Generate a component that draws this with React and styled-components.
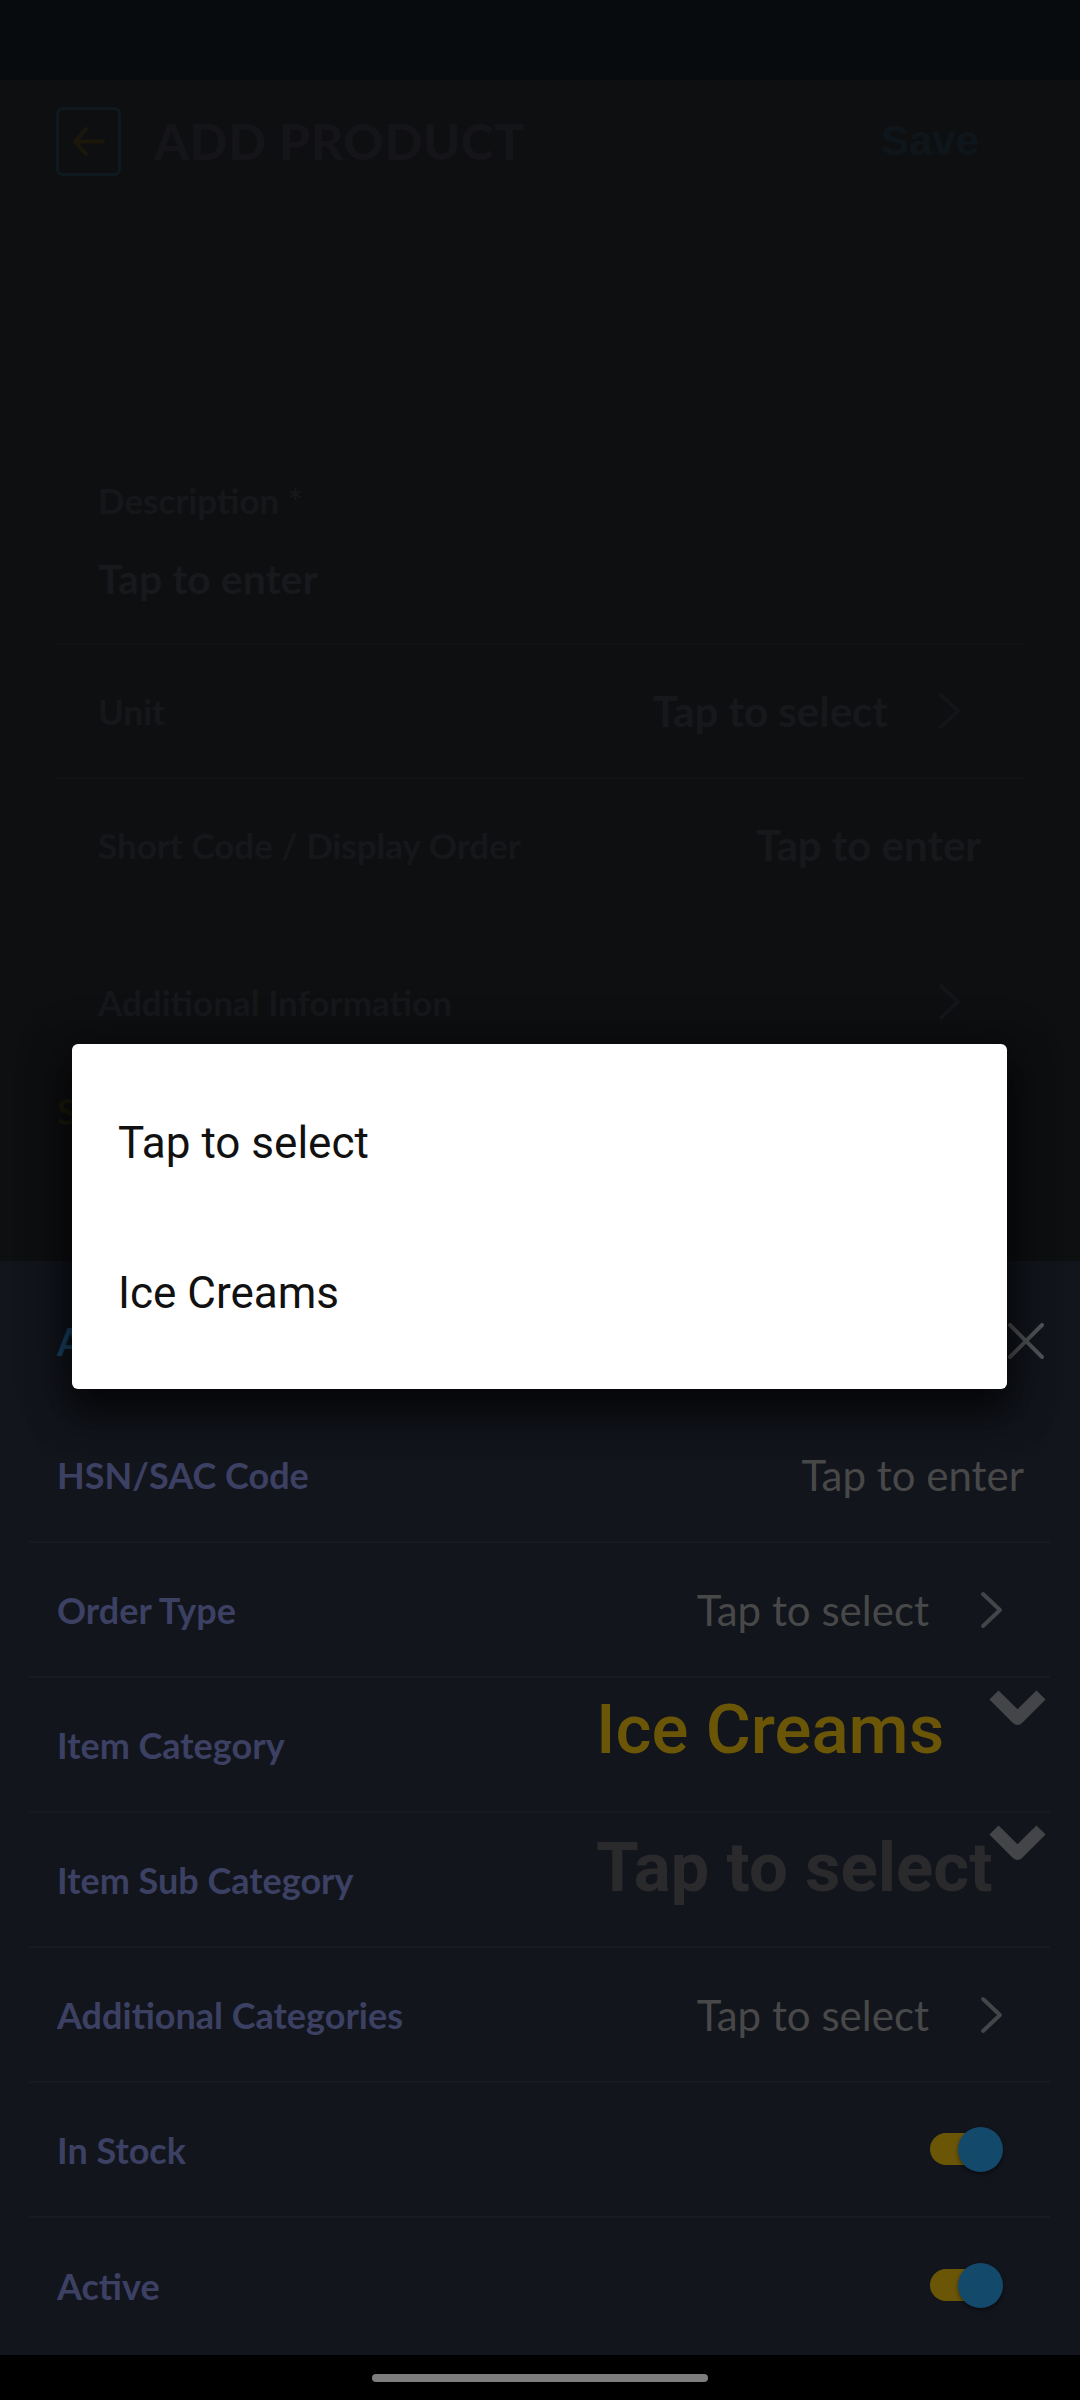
import React from 'react';
import styled, { createGlobalStyle } from 'styled-components';

const GlobalStyle = createGlobalStyle`
  body {
    margin: 0;
    background: #000;
    font-family: Lato, "Noto Sans", sans-serif;
  }
`;

const Phone = styled.div`
  position: relative;
  width: 1080px;
  height: 2400px;
  display: flex;
  flex-direction: column;
  overflow: hidden;
`;

const StatusBar = styled.div`
  height: 80px;
  background: #080b0e;
`;

const Screen = styled.div`
  height: 1181px;
  background: #0e0f11;
  display: flex;
  flex-direction: column;
`;

const Header = styled.div`
  height: 122px;
  display: flex;
  align-items: center;
  padding: 0 101px 0 56px;
`;

const BackButton = styled.div`
  width: 65px;
  height: 69px;
  box-sizing: border-box;
  border: 3px solid #0f1a20;
  border-radius: 7px;
  display: flex;
  align-items: center;
  justify-content: center;
`;

const Title = styled.h1`
  margin: 0 0 0 33px;
  font-size: 50px;
  font-weight: 900;
  color: #151418;
  letter-spacing: 0.5px;
`;

const Save = styled.span`
  margin-left: auto;
  font-family: "Liberation Sans", Arial, sans-serif;
  font-weight: 700;
  font-size: 42px;
  color: #0f161b;
`;

const FormCard = styled.div`
  margin: 277px 54px 0 55px;
`;

const FieldLabel = styled.div`
  font-size: 35px;
  font-weight: 700;
  line-height: 1.2;
  color: #16171a;
  white-space: nowrap;
`;

const DescriptionBlock = styled.div`
  padding: 0 45px 40px 43px;
`;

const Placeholder = styled.div`
  margin-top: 33px;
  font-size: 41px;
  font-weight: 700;
  line-height: 1.2;
  color: #18191c;
`;

const FormRow = styled.div`
  height: 134px;
  box-sizing: border-box;
  display: flex;
  align-items: center;
  padding: 0 45px 0 43px;
  border-top: ${(p) => (p.$line ? '2px solid #111215' : 'none')};
  margin-top: ${(p) => p.$gap || 0}px;
`;

const FormValue = styled.span`
  margin-left: auto;
  font-size: 42px;
  font-weight: 700;
  color: #17181b;
`;

const ChevronBox = styled.span`
  display: flex;
  margin-left: ${(p) => (p.$gap ? `${p.$gap}px` : 'auto')};
  margin-right: ${(p) => p.$right || 0}px;
`;

const SectionTitle = styled.div`
  margin: 20px 0 0 57px;
  font-size: 36px;
  font-weight: 700;
  color: #1f1a0d;
  white-space: nowrap;
`;

const Sheet = styled.div`
  height: 1094px;
  background: #12151c;
  display: flex;
  flex-direction: column;
`;

const SheetHeader = styled.div`
  height: 147px;
  box-sizing: border-box;
  padding: 12px 36px 0 57px;
  display: flex;
  align-items: center;
  justify-content: space-between;
`;

const SheetTitle = styled.div`
  font-size: 38px;
  font-weight: 700;
  color: #18476a;
  white-space: nowrap;
`;

const List = styled.div`
  margin: 0 30px 0 29px;
`;

const Row = styled.div`
  height: 135px;
  box-sizing: border-box;
  display: flex;
  align-items: center;
  padding: 0 26px 0 28px;
  border-bottom: ${(p) => (p.$last ? 'none' : '2px solid #171a22')};
`;

const Label = styled.span`
  font-size: 36px;
  font-weight: 700;
  color: #3c4063;
`;

const Value = styled.span`
  margin-left: auto;
  font-size: 42px;
  color: #484849;
`;

const Spinner = styled.div`
  position: relative;
  align-self: stretch;
  width: 452px;
  margin-left: auto;
  margin-right: -24px;
`;

const SpinnerText = styled.div`
  margin-top: ${(p) => p.$top}px;
  font-family: Roboto, "Noto Sans", sans-serif;
  font-size: ${(p) => p.$size}px;
  font-weight: ${(p) => p.$weight};
  line-height: 1;
  color: ${(p) => p.$color};
  white-space: nowrap;
`;

const SpinnerArrow = styled.svg`
  position: absolute;
  top: 12px;
  right: 0;
`;

const Switch = styled.div`
  position: relative;
  width: 73px;
  height: 45px;
  margin-left: auto;
  margin-right: 21px;
`;

const Track = styled.div`
  position: absolute;
  left: 0;
  top: 6px;
  width: 58px;
  height: 32px;
  border-radius: 16px;
  background: #6b5608;
`;

const Thumb = styled.div`
  position: absolute;
  right: 0;
  top: 0;
  width: 45px;
  height: 45px;
  border-radius: 50%;
  background: #134a6c;
  box-shadow: 0 2px 4px rgba(0, 0, 0, 0.45);
`;

const NavBar = styled.div`
  flex: 1;
  background: #000;
  display: flex;
  align-items: center;
  justify-content: center;
`;

const HomeIndicator = styled.div`
  width: 336px;
  height: 8px;
  border-radius: 4px;
  background: #7d7d7d;
`;

const Dialog = styled.div`
  position: absolute;
  left: 72px;
  top: 1044px;
  width: 935px;
  height: 345px;
  box-sizing: border-box;
  padding-top: 24px;
  background: #fff;
  border-radius: 6px;
  box-shadow: 0 24px 38px 3px rgba(0, 0, 0, 0.5), 0 9px 46px 8px rgba(0, 0, 0, 0.4);
`;

const DialogItem = styled.div`
  height: 150px;
  display: flex;
  align-items: center;
  padding-left: 46px;
  font-family: Roboto, "Noto Sans", sans-serif;
  font-size: 44px;
  color: #111;
`;

function ChevronRight({ color }) {
  return (
    <svg width="26" height="38" viewBox="0 0 26 38">
      <polyline points="4,3 21,19 4,35" fill="none" stroke={color} strokeWidth="4" strokeLinecap="round" strokeLinejoin="round" />
    </svg>
  );
}

function ChevronDown() {
  return (
    <SpinnerArrow width="61" height="39" viewBox="0 0 61 39">
      <polyline points="7,5 30.5,28.5 54,5" fill="none" stroke="#444548" strokeWidth="13" strokeLinejoin="round" />
    </SpinnerArrow>
  );
}

function Toggle() {
  return (
    <Switch>
      <Track />
      <Thumb />
    </Switch>
  );
}

const rows = [
  { label: 'HSN/SAC Code', kind: 'enter' },
  { label: 'Order Type', kind: 'select' },
  { label: 'Item Category', kind: 'spinner', text: 'Ice Creams', color: '#6b5608', weight: 500, size: 69, top: 17 },
  { label: 'Item Sub Category', kind: 'spinner', text: 'Tap to select', color: '#2a2a2c', weight: 700, size: 69, top: 20 },
  { label: 'Additional Categories', kind: 'select' },
  { label: 'In Stock', kind: 'toggle' },
  { label: 'Active', kind: 'toggle' },
];

function App() {
  return (
    <Phone>
      <GlobalStyle />
      <StatusBar />
      <Screen>
        <Header>
          <BackButton>
            <svg width="33" height="29" viewBox="0 0 33 29">
              <path d="M14 2 L3 14.5 L14 27 M3 14.5 H31" fill="none" stroke="#1c170b" strokeWidth="4" strokeLinecap="round" strokeLinejoin="round" />
            </svg>
          </BackButton>
          <Title>ADD PRODUCT</Title>
          <Save>Save</Save>
        </Header>
        <FormCard>
          <DescriptionBlock>
            <FieldLabel>Description *</FieldLabel>
            <Placeholder>Tap to enter</Placeholder>
          </DescriptionBlock>
          <FormRow $line>
            <FieldLabel>Unit</FieldLabel>
            <FormValue>Tap to select</FormValue>
            <ChevronBox $gap={49} $right={18}>
              <ChevronRight color="#141518" />
            </ChevronBox>
          </FormRow>
          <FormRow $line>
            <FieldLabel>Short Code / Display Order</FieldLabel>
            <FormValue>Tap to enter</FormValue>
          </FormRow>
          <FormRow $gap={24}>
            <FieldLabel>Additional Information</FieldLabel>
            <ChevronBox $right={18}>
              <ChevronRight color="#141518" />
            </ChevronBox>
          </FormRow>
        </FormCard>
        <SectionTitle>Stock Settings</SectionTitle>
      </Screen>
      <Sheet>
        <SheetHeader>
          <SheetTitle>Additional Details</SheetTitle>
          <svg width="36" height="36" viewBox="0 0 36 36">
            <path d="M2 2 L34 34 M34 2 L2 34" stroke="#545558" strokeWidth="4" strokeLinecap="round" />
          </svg>
        </SheetHeader>
        <List>
          {rows.map((row, i) => (
            <Row key={row.label} $last={i === rows.length - 1}>
              <Label>{row.label}</Label>
              {row.kind === 'enter' && <Value>Tap to enter</Value>}
              {row.kind === 'select' && (
                <>
                  <Value>Tap to select</Value>
                  <ChevronBox $gap={50} $right={19}>
                    <ChevronRight color="#444548" />
                  </ChevronBox>
                </>
              )}
              {row.kind === 'spinner' && (
                <Spinner>
                  <SpinnerText $top={row.top} $size={row.size} $weight={row.weight} $color={row.color}>
                    {row.text}
                  </SpinnerText>
                  <ChevronDown />
                </Spinner>
              )}
              {row.kind === 'toggle' && <Toggle />}
            </Row>
          ))}
        </List>
      </Sheet>
      <NavBar>
        <HomeIndicator />
      </NavBar>
      <Dialog>
        <DialogItem>Tap to select</DialogItem>
        <DialogItem>Ice Creams</DialogItem>
      </Dialog>
    </Phone>
  );
}

export default App;
